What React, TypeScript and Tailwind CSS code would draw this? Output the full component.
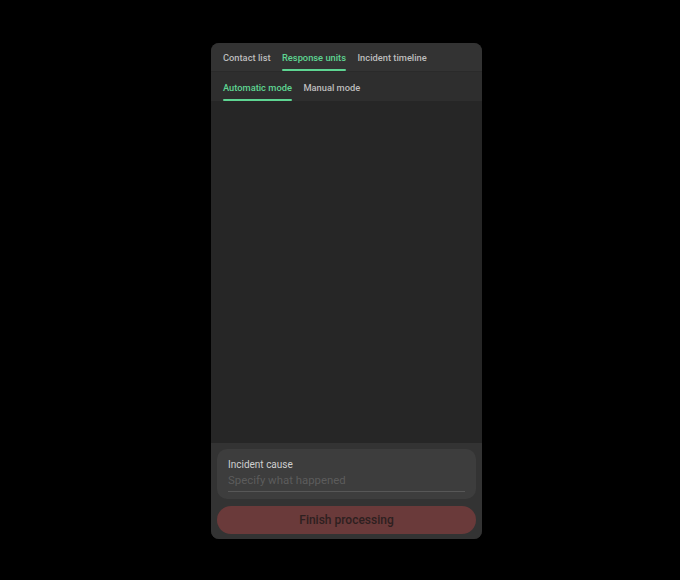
import React from 'react';

const tabs = ['Contact list', 'Response units', 'Incident timeline'];
const modes = ['Automatic mode', 'Manual mode'];

export default function App() {
  return (
    <main
      className="w-[680px] h-[580px] bg-black flex pl-[211px] pt-[43px]"
      style={{ fontFamily: 'Roboto, "Liberation Sans", sans-serif' }}
    >
      <section className="w-[271px] h-[496px] rounded-[8px] overflow-hidden flex flex-col bg-[#262626]">
        <nav className="h-[29px] bg-[#333333] flex gap-[11.5px] px-[12px] border-b border-[#2a2a2a]">
          {tabs.map((t, i) => (
            <div
              key={t}
              className={
                'h-full flex items-center pt-[2px] relative text-[9.3px] font-medium ' +
                (i === 1 ? 'text-[#5ed592]' : 'text-[#bdbdbd]')
              }
            >
              {t}
              {i === 1 && <span className="absolute left-0 right-0 bottom-0 h-[2px] bg-[#5ed592] rounded-full" />}
            </div>
          ))}
        </nav>

        <nav className="h-[29px] bg-[#2e2e2e] flex gap-[11.5px] px-[12px]">
          {modes.map((m, i) => (
            <div
              key={m}
              className={
                'h-full flex items-center pt-[2px] relative text-[9.3px] font-medium ' +
                (i === 0 ? 'text-[#5ed592]' : 'text-[#bdbdbd]')
              }
            >
              {m}
              {i === 0 && <span className="absolute left-0 right-0 bottom-0 h-[2px] bg-[#5ed592] rounded-full" />}
            </div>
          ))}
        </nav>

        <div className="flex-1 bg-[#262626]" />

        <footer className="bg-[#333333] px-[6px] pt-[6px] pb-[5px] flex flex-col gap-[7px]">
          <div className="h-[50px] rounded-[10px] bg-[#3d3d3d] px-[11px] pt-[9px]">
            <div className="text-[10px] text-[#cfcfcf] leading-[13px]">Incident cause</div>
            <div className="text-[11.4px] text-[#5c5c5c] leading-[16px] mt-[1px]">Specify what happened</div>
            <div className="h-px bg-[#575757] mt-[3px]" />
          </div>
          <button
            type="button"
            className="h-[28px] rounded-full bg-[#6a3a3a] text-[12px] font-medium text-[#2e2020] flex items-center justify-center"
          >
            Finish processing
          </button>
        </footer>
      </section>
    </main>
  );
}
